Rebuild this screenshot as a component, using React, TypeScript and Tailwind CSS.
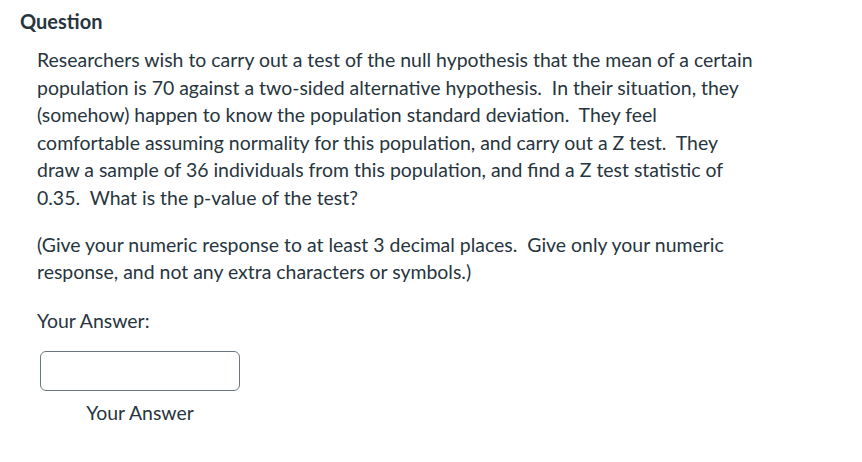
export default function App() {
  return (
    <div className="w-[862px] h-[462px] bg-white text-[#273540]" style={{ fontFamily: "Lato, 'Open Sans', sans-serif" }}>
      <div className="pl-[20px] pt-[8px]">
        <h2 className="text-[20px] font-bold leading-[26px]">Question</h2>
        <div className="pl-[17px] pt-[12px] text-[19.45px] leading-[27.6px] whitespace-pre">
          <p>
            {"Researchers wish to carry out a test of the null hypothesis that the mean of a certain\npopulation is 70 against a two-sided alternative hypothesis.  In their situation, they\n(somehow) happen to know the population standard deviation.  They feel\ncomfortable assuming normality for this population, and carry out a Z test.  They\ndraw a sample of 36 individuals from this population, and find a Z test statistic of\n0.35.  What is the p-value of the test?"}
          </p>
          <p className="mt-[19px]">
            {"(Give your numeric response to at least 3 decimal places.  Give only your numeric\nresponse, and not any extra characters or symbols.)"}
          </p>
          <p className="mt-[21px]">Your Answer:</p>
          <div className="mt-[17px] ml-[3px] flex flex-col items-center w-[200px]">
            <input className="w-[200px] h-[40px] border border-[#6b7780] rounded-[6px] outline-none bg-white" />
            <label className="mt-[8px] text-[19.45px] leading-[27.6px]">Your Answer</label>
          </div>
        </div>
      </div>
    </div>
  );
}
